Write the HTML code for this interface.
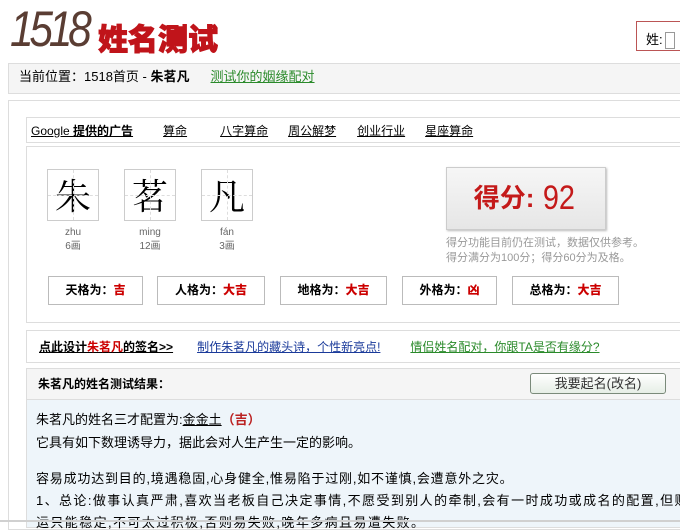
<!DOCTYPE html>
<html><head><meta charset="utf-8"><style>
*{margin:0;padding:0;box-sizing:border-box}
body{width:680px;height:522px;overflow:hidden;background:#fff;font-family:"Liberation Sans","Noto Sans CJK SC",sans-serif;font-size:12px;color:#000;position:relative}
.a{position:absolute}
u{text-decoration:underline}
.cb{position:absolute;top:169px;width:52px;height:52px;border:1px solid #ccc;font-size:36px;text-align:center;line-height:50px;font-family:"Noto Serif CJK SC",serif}
.cb:before{content:"";position:absolute;left:0;right:0;top:25px;border-top:1px dashed #ddd}
.cb:after{content:"";position:absolute;top:0;bottom:0;left:25px;border-left:1px dashed #ddd}
.py{position:absolute;top:226px;width:52px;text-align:center;font-size:10px;color:#666;line-height:14px}
.g{position:absolute;top:276px;height:29px;border:1px solid #bbb;font-weight:bold;font-size:12px;text-align:center;line-height:27px}
.g b{color:#c00}
.t{position:absolute;left:36px;font-size:13px;white-space:nowrap}
</style></head><body>
<div class="a" style="left:10px;top:0px;font-size:50px;font-style:italic;color:#5a3d33;font-family:'Liberation Sans',sans-serif;letter-spacing:-5px;transform:scaleX(0.85);transform-origin:left">1518</div>
<div class="a" style="left:98px;top:15px;font-size:30px;font-weight:900;color:#c0141a;-webkit-text-stroke:1px #c0141a">姓名测试</div>
<div class="a" style="left:636px;top:21px;width:50px;height:30px;border:1px solid #b55;padding:7px 0 0 9px;font-size:13px">姓:<span style="display:inline-block;width:10px;height:17px;border:1px solid #999;vertical-align:middle;margin-left:2px"></span></div>
<div class="a" style="left:8px;top:63px;width:680px;height:31px;background:#f5f5f5;border:1px solid #ddd"></div>
<div class="a" style="left:19px;top:68px;font-size:13px;line-height:17px">当前位置：1518首页 - <b>朱茗凡</b>　<u style="color:#2a8a2a;margin-left:8px">测试你的姻缘配对</u></div>
<div class="a" style="left:8px;top:100px;width:680px;height:430px;border:1px solid #ddd"></div>
<div class="a" style="left:26px;top:117px;width:660px;height:26px;border:1px solid #ddd"></div>
<div class="a" style="left:31px;top:122px;font-size:12px;white-space:nowrap"><u>Google <b>提供的广告</b></u><u style="margin-left:30px">算命</u><u style="margin-left:33px">八字算命</u><u style="margin-left:20px">周公解梦</u><u style="margin-left:21px">创业行业</u><u style="margin-left:20px">星座算命</u></div>
<div class="a" style="left:26px;top:146px;width:660px;height:177px;border:1px solid #ddd"></div>
<div class="cb" style="left:47px">朱</div><div class="cb" style="left:124px">茗</div><div class="cb" style="left:201px">凡</div>
<div class="py" style="left:47px">zhu<br>6画</div><div class="py" style="left:124px">ming<br>12画</div><div class="py" style="left:201px">fán<br>3画</div>
<div class="a" style="left:446px;top:167px;width:160px;height:63px;border:1px solid #ccc;background:linear-gradient(#f6f6f6,#e6e6e6);box-shadow:1px 1px 2px #bbb;text-align:center;line-height:61px;color:#c41a1a"><b style="font-size:26px;vertical-align:top">得分:</b><span style="font-size:34px;font-family:'Liberation Sans',sans-serif;vertical-align:top;margin-left:6px;transform:scaleX(0.85);display:inline-block">92</span></div>
<div class="a" style="left:446px;top:236px;font-size:11px;color:#999;line-height:15px">得分功能目前仍在测试，数据仅供参考。<br>得分满分为100分；得分60分为及格。</div>
<div class="g" style="left:48px;width:95px">天格为：<b>吉</b></div>
<div class="g" style="left:157px;width:108px">人格为：<b>大吉</b></div>
<div class="g" style="left:280px;width:107px">地格为：<b>大吉</b></div>
<div class="g" style="left:402px;width:95px">外格为：<b>凶</b></div>
<div class="g" style="left:512px;width:107px">总格为：<b>大吉</b></div>
<div class="a" style="left:26px;top:330px;width:660px;height:33px;border:1px solid #ddd"></div>
<div class="a" style="left:39px;top:338px;font-size:12px;white-space:nowrap"><u><b>点此设计<span style="color:#c00">朱茗凡</span>的签名&gt;&gt;</b></u><u style="color:#1a3a9a;margin-left:24px">制作朱茗凡的藏头诗，个性新亮点!</u><u style="color:#2a8a2a;margin-left:30px">情侣姓名配对，你跟TA是否有缘分?</u></div>
<div class="a" style="left:26px;top:368px;width:660px;height:160px;border:1px solid #ddd;background:#eef5fa"></div>
<div class="a" style="left:27px;top:369px;width:658px;height:31px;background:#f5f5f5;border-bottom:1px solid #ddd"></div>
<div class="a" style="left:38px;top:375px;font-weight:bold;font-size:12px">朱茗凡的姓名测试结果：</div>
<div class="a" style="left:530px;top:373px;width:136px;height:21px;border:1px solid #7a8a7a;border-radius:3px;background:linear-gradient(#fff,#e6eee6);text-align:center;font-size:13px;line-height:19px;color:#333">我要起名(改名)</div>
<div class="t" style="top:409px">朱茗凡的姓名三才配置为:<u>金金土</u><b style="color:#b22">（吉）</b></div>
<div class="t" style="top:432px">它具有如下数理诱导力，据此会对人生产生一定的影响。</div>
<div class="t" style="top:468px;letter-spacing:0.8px">容易成功达到目的,境遇稳固,心身健全,惟易陷于过刚,如不谨慎,会遭意外之灾。</div>
<div class="t" style="top:490px;letter-spacing:1.4px">1、总论:做事认真严肃,喜欢当老板自己决定事情,不愿受到别人的牵制,会有一时成功或成名的配置,但财</div>
<div class="t" style="top:512px;letter-spacing:1.4px">运只能稳定,不可太过积极,否则易失败,晚年多病且易遭失败。</div>
<div class="a" style="left:0;top:520px;width:680px;height:2px;background:#d0d0d0"></div>
</body></html>
